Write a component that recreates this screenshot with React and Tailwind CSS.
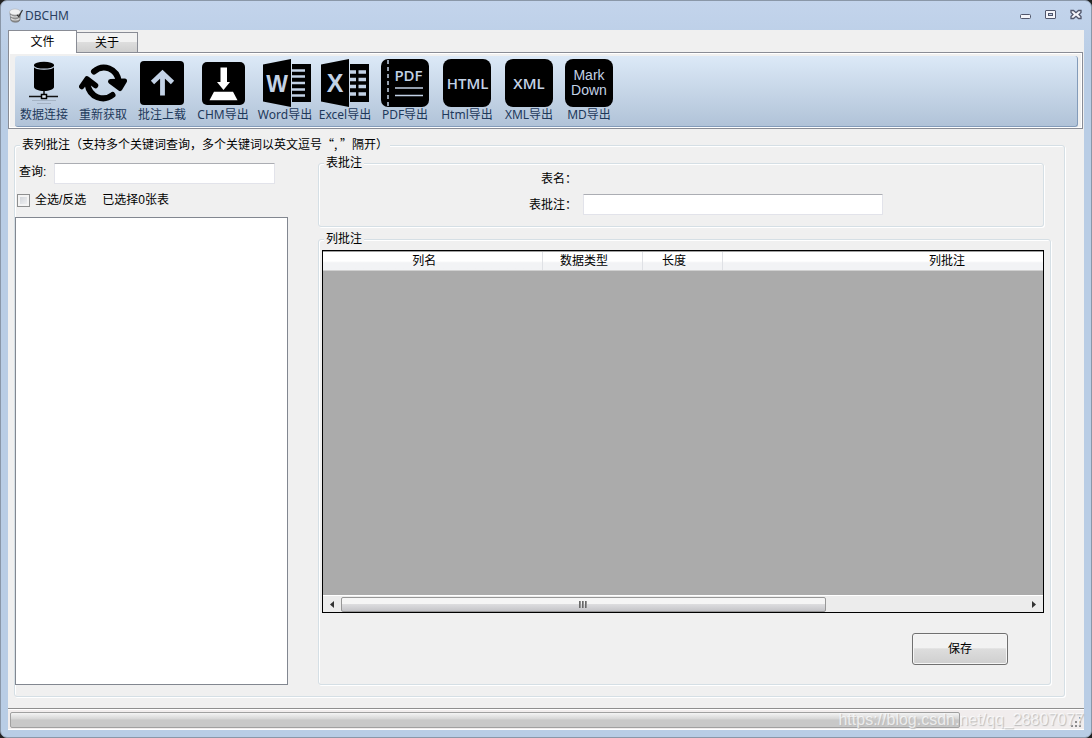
import React, { useState } from "react";

const uiFont = "font-['Noto_Sans','Open_Sans','Noto_Sans_CJK_SC',sans-serif]";

const DatabaseIcon = () => (
  <svg viewBox="0 0 48 48" className="w-12 h-12">
    <path d="M14 6v22c0 2.200 4.500 4 10 4s10-1.800 10-4V6z" fill="#000" />
    <path d="M14 7.500c2 3.500 18 3.500 20 0" fill="none" stroke="#c9d8ea" strokeWidth="1.200" />
    <ellipse cx="24" cy="5.800" rx="10" ry="3" fill="#000" />
    <path d="M24 32v4M9 37.500h13M26 37.500h12" stroke="#111" strokeWidth="1.500" />
    <rect x="21.500" y="35.500" width="5" height="4" fill="#dfe8f2" stroke="#000" strokeWidth="1.500" />
    <path d="M12 41.500h24M17 44.500h14" stroke="#93a0b0" strokeWidth="1" opacity="0.600" />
  </svg>
);

const RefreshIcon = () => (
  <svg viewBox="0 0 48 48" className="w-12 h-12" fill="none" stroke="#000" strokeLinecap="round" strokeLinejoin="round">
    <path d="M15 12.500C24 4.500 38 9 40 23" strokeWidth="6" />
    <path d="M33.500 36C24.500 43 10.500 38.500 8.500 25" strokeWidth="6" />
    <path d="M31.500 22.500L41 29.500 45.500 22z" fill="#000" strokeWidth="5" />
    <path d="M2.800 27.500L8 20 16.500 26.500" strokeWidth="5.500" />
  </svg>
);

const UploadIcon = () => (
  <svg viewBox="0 0 48 48" className="w-12 h-12">
    <rect x="2" y="2" width="44" height="44" rx="4" fill="#000" />
    <path d="M24.500 36.500V14M14.500 23.500l10-9.500 10 9.500" fill="none" stroke="#c3d2e6" strokeWidth="4.800" />
  </svg>
);

const ChmIcon = () => (
  <svg viewBox="0 0 48 48" className="w-12 h-12">
    <rect x="3" y="3" width="43" height="43" rx="5" fill="#000" />
    <path d="M21.500 8.500H28V23h3l-6.500 8L18 23h3.500z" fill="#fff" />
    <path d="M15 32.800h19l4.500 8.400h-28z" fill="#fff" />
  </svg>
);

const WordIcon = () => (
  <svg viewBox="0 0 52 48" className="w-[52px] h-12">
    <path d="M4 5.500L32 0v48L4 42.500zM33 5h19v38H33z" fill="#000" />
    <path d="M33 11.500h13M33 17.500h13M33 24h13M33 30.500h13M33 36.500h13" stroke="#c3d2e6" strokeWidth="2.500" />
    <text x="18" y="33" textAnchor="middle" fill="#c3d2e6" className="text-[23px] font-bold font-['Liberation_Sans',sans-serif]">
      W
    </text>
  </svg>
);

const ExcelIcon = () => (
  <svg viewBox="0 0 48 48" className="w-12 h-12">
    <path d="M0 5.500L28 0v48L0 42.500zM29 5h19v38H29z" fill="#000" />
    <path
      d="M29 13h6M29 20.500h6M29 27.500h6M29 35h6M37.500 13h7.500M37.500 20.500h7.500M37.500 27.500h7.500M37.500 35h7.500"
      stroke="#c3d2e6"
      strokeWidth="3.500"
    />
    <text x="14" y="33" textAnchor="middle" fill="#c3d2e6" className="text-[25px] font-bold font-['Liberation_Sans',sans-serif]">
      X
    </text>
  </svg>
);

const PdfIcon = () => (
  <svg viewBox="0 0 48 48" className="w-12 h-12">
    <rect width="48" height="48" rx="7" fill="#000" />
    <path d="M7 1v46" stroke="#c3d2e6" strokeWidth="1.500" strokeDasharray="4 3" />
    <text x="27.500" y="22" textAnchor="middle" fill="#c3d2e6" className="text-[15px] font-semibold font-['Open_Sans',sans-serif]">
      PDF
    </text>
    <path d="M14 29h28M14 36.500h28" stroke="#c3d2e6" strokeWidth="1.500" />
  </svg>
);

const HtmlIcon = () => (
  <svg viewBox="0 0 48 48" className="w-12 h-12">
    <rect width="48" height="48" rx="8" fill="#000" />
    <text x="24.500" y="30" textAnchor="middle" fill="#c3d2e6" className="text-[15px] font-semibold font-['Open_Sans',sans-serif]">
      HTML
    </text>
  </svg>
);

const XmlIcon = () => (
  <svg viewBox="0 0 48 48" className="w-12 h-12">
    <rect width="48" height="48" rx="8" fill="#000" />
    <text x="24" y="30" textAnchor="middle" fill="#c3d2e6" className="text-[15px] font-semibold font-['Open_Sans',sans-serif]">
      XML
    </text>
  </svg>
);

const MarkdownIcon = () => (
  <svg viewBox="0 0 48 48" className="w-12 h-12">
    <rect width="48" height="48" rx="8" fill="#000" />
    <g fill="#c3d2e6" textAnchor="middle" className="text-[14px] font-['Liberation_Sans',sans-serif]">
      <text x="24" y="21">Mark</text>
      <text x="24" y="36">Down</text>
    </g>
  </svg>
);

const tools = [
  { label: "数据连接", icon: DatabaseIcon, width: "w-[58px]" },
  { label: "重新获取", icon: RefreshIcon, width: "w-[60px]" },
  { label: "批注上载", icon: UploadIcon, width: "w-[58px]" },
  { label: "CHM导出", icon: ChmIcon, width: "w-[64px]" },
  { label: "Word导出", icon: WordIcon, width: "w-[60px]" },
  { label: "Excel导出", icon: ExcelIcon, width: "w-[60px]" },
  { label: "PDF导出", icon: PdfIcon, width: "w-[60px]" },
  { label: "Html导出", icon: HtmlIcon, width: "w-[64px]" },
  { label: "XML导出", icon: XmlIcon, width: "w-[60px]" },
  { label: "MD导出", icon: MarkdownIcon, width: "w-[60px]" },
];

const TitleBar = () => (
  <header className="flex items-center h-[29px] pl-2 pr-[9px]">
    <svg viewBox="0 0 14 15" className="w-3.5 h-[15px]">
      <path d="M1 4.500l.800 7.500c.400 1.500 2.500 2.200 4.700 2.200s4-.700 4.300-2.200l.700-7z" fill="#8d8d8d" stroke="#666" strokeWidth="0.600" />
      <path d="M1.500 7.500c2 2 7 2 9 0M2 10.500c2 2 6.500 2 8.500 0" fill="none" stroke="#dcdcdc" strokeWidth="1.200" />
      <ellipse cx="6" cy="4" rx="5.500" ry="3" fill="#f1f1f1" stroke="#aaa" strokeWidth="0.500" />
      <path d="M13.500 2L9.800 8.500 8 7" fill="none" stroke="#333" strokeWidth="1.200" />
    </svg>
    <h1 className={`ml-0.5 text-xs text-[#2b3f5f] ${uiFont}`}>DBCHM</h1>
    <div className="flex items-center gap-3.5 ml-auto pb-0.5">
      <button type="button" aria-label="最小化">
        <svg viewBox="0 0 11 11" className="w-[11px] h-[11px]">
          <rect x="0.500" y="5.500" width="10" height="4" rx="1" fill="#f5f5fa" stroke="#51566b" />
        </svg>
      </button>
      <button type="button" aria-label="最大化">
        <svg viewBox="0 0 11 11" className="w-[11px] h-[11px]">
          <rect x="0.500" y="1.500" width="10" height="8" rx="0.500" fill="#f5f5fa" stroke="#51566b" />
          <rect x="3.500" y="4.500" width="4" height="2" fill="#c0d0e8" stroke="#51566b" />
        </svg>
      </button>
      <button type="button" aria-label="关闭">
        <svg viewBox="0 0 12 11" className="w-3 h-[11px]">
          <path
            d="M1 1.500h2.500L6 3.700l2.500-2.200H11v2L9 5.500l2 2v2H8.500L6 7.300 3.500 9.500H1v-2l2-2-2-2z"
            fill="#f5f5fa"
            stroke="#51566b"
            strokeWidth="1.300"
          />
        </svg>
      </button>
    </div>
  </header>
);

const Toolbar = () => (
  <div className="mr-px border border-[#898c95] bg-white p-px">
    <div className="bg-[#f0f0f0] pl-[5px] pr-[3px] pt-0.5">
      <div className="flex h-[71px] pt-[3px] rounded-[3px] border-r border-b border-[#839bb9] bg-linear-to-b from-[#dce9f7] to-[#b1c3d8]">
        {tools.map(({ label, icon: Icon, width }) => (
          <button key={label} type="button" className={`flex flex-col items-center shrink-0 ${width}`}>
            <Icon />
            <span className={`text-xs leading-4 whitespace-nowrap text-[#1e395b] ${uiFont}`}>{label}</span>
          </button>
        ))}
      </div>
    </div>
  </div>
);

const GroupBox = ({ id, title, className, bodyClassName, children }) => (
  <div
    role="group"
    aria-labelledby={id}
    className={`flex flex-col border border-[#d5dfe5] rounded-[3px] shadow-[1px_1px_0_#fff,inset_1px_1px_0_#fff] ${className}`}
  >
    <h2
      id={id}
      className="self-start h-[18px] -mt-2.5 ml-[5px] px-0.5 leading-4 bg-[#f0f0f0] font-['Noto_Sans_CJK_SC',sans-serif]"
    >
      {title}
    </h2>
    <div className={`flex flex-1 ${bodyClassName}`}>{children}</div>
  </div>
);

const inputClass =
  "h-[21px] px-1 bg-white border border-[#e2e3ea] border-t-[#abadb3] rounded-[1px] outline-none";

const TableList = () => {
  const [checked, setChecked] = useState(false);

  return (
    <div className="flex flex-col w-[273px] shrink-0 pt-[9px]">
      <div className="flex pl-1">
        <label htmlFor="search" className="w-[35px] leading-[18px]">
          查询:
        </label>
        <input id="search" type="text" className={`w-[221px] ${inputClass}`} />
      </div>
      <div className="flex items-center h-4 mt-2 pl-0.5">
        <input
          id="all"
          type="checkbox"
          checked={checked}
          onChange={() => setChecked(!checked)}
          className="appearance-none w-[13px] h-[13px] border border-[#8e8f8f] bg-linear-to-br from-[#cbcfd5] to-[#f6f6f6] shadow-[inset_0_0_0_2px_#f4f4f4] checked:bg-[#4b6bb0]"
        />
        <label htmlFor="all" className="ml-[5px]">
          全选/反选
        </label>
        <span className="ml-4">已选择0张表</span>
      </div>
      <div role="listbox" aria-label="表" className="flex-1 mt-[9px] bg-white border border-[#828790]" />
    </div>
  );
};

const columns = [
  { name: "列名", width: "w-[219px]" },
  { name: "数据类型", width: "w-[100px]" },
  { name: "长度", width: "w-[80px]" },
  { name: "列批注", width: "w-[466px]" },
];

const ColumnGrid = () => (
  <div className="flex flex-col flex-1 mt-0.5 border border-black bg-[#ababab] overflow-hidden">
    <div className="overflow-hidden border-t border-[#a0a0a0] bg-[#f0f0f0]">
      <table className="table-fixed w-[865px] h-[19px] border-collapse">
        <thead>
          <tr>
            {columns.map((col) => (
              <th
                key={col.name}
                className={`pr-4 pt-px pb-0 leading-[17px] font-normal border-r border-b border-r-[#dfe1e5] border-b-[#d0d0d0] bg-linear-to-b from-white from-50% to-[#f2f3f5] to-60% ${col.width}`}
              >
                {col.name}
              </th>
            ))}
          </tr>
        </thead>
      </table>
    </div>
    <div className="flex-1" />
    <div className="flex h-[17px] pt-px border-t border-white bg-[#ececec]">
      <button type="button" aria-label="向左滚动" className="flex items-center justify-center w-[18px]">
        <svg viewBox="0 0 4 7" className="w-1 h-[7px]">
          <path d="M4 0v7L0 3.500z" fill="#333" />
        </svg>
      </button>
      <div className="flex flex-1">
        <div className="flex flex-[485] items-center justify-center gap-px border border-[#979797] rounded-[2px] bg-linear-to-b from-[#f5f5f5] from-45% via-[#dcdcde] via-50% to-[#c4c4c8]">
          <span className="w-0.5 h-[7px] bg-linear-to-r from-[#555] to-[#aaa]" />
          <span className="w-0.5 h-[7px] bg-linear-to-r from-[#555] to-[#aaa]" />
          <span className="w-0.5 h-[7px] bg-linear-to-r from-[#555] to-[#aaa]" />
        </div>
        <div className="flex-[200]" />
      </div>
      <button type="button" aria-label="向右滚动" className="flex items-center justify-center w-[18px]">
        <svg viewBox="0 0 4 7" className="w-1 h-[7px]">
          <path d="M0 0v7l4-3.500z" fill="#333" />
        </svg>
      </button>
    </div>
  </div>
);

const StatusBar = () => (
  <footer className="relative flex h-[22px] mt-[11px] pt-[3px] pl-0.5 pr-[124px] border-t border-[#8e8e8e] bg-[#f1eded] shadow-[inset_0_1px_0_#fff,inset_0_-1px_0_#fff]">
    <div
      role="progressbar"
      aria-label="进度"
      className="flex-1 h-4 border border-[#a0a0a0] rounded-[2px] bg-linear-to-b from-[#f4f4f4] via-[#d8d8d8] via-40% to-[#c8c8c8] to-50%"
    />
    <svg viewBox="0 0 11 11" className="absolute right-0.5 bottom-0.5 w-[11px] h-[11px]" fill="#8c8c8c">
      <path d="M8 0h2v2H8zM4 4h2v2H4zM8 4h2v2H8zM0 8h2v2H0zM4 8h2v2H4zM8 8h2v2H8z" />
    </svg>
    <span className="absolute right-0 top-0.5 text-base leading-[18px] whitespace-nowrap text-white/70 [text-shadow:1px_1px_1px_#bbb] font-['Liberation_Sans',sans-serif]">
      https://blog.csdn.net/qq_28807077
    </span>
  </footer>
);

const App = () => {
  return (
    <div className="bg-[#222]">
      <div className="flex flex-col min-h-screen rounded-[7px] border border-[#8a97a8] bg-[#bacee6] bg-linear-to-b from-[#c3d4ec] to-[#b9cde5] to-[60px] text-xs text-black font-['Liberation_Sans','Noto_Sans_CJK_SC',sans-serif]">
        <TitleBar />
        <main className="flex flex-col flex-1 mx-[7px] mb-[7px] bg-[#f0f0f0]">
          <div role="tablist" className="flex items-end h-[22px]">
            <button
              type="button"
              role="tab"
              aria-selected="true"
              className="relative z-10 w-[69px] h-[23px] -mb-px border border-b-0 border-[#898c95] bg-white"
            >
              文件
            </button>
            <button
              type="button"
              role="tab"
              aria-selected="false"
              className="w-[61px] h-5 pt-px border border-l-0 border-b-0 border-[#898c95] bg-linear-to-b from-[#f2f2f2] from-45% via-[#dddddd] via-50% to-[#cfcfcf]"
            >
              关于
            </button>
          </div>
          <Toolbar />
          <GroupBox
            id="group-all"
            title="表列批注（支持多个关键词查询，多个关键词以英文逗号“, ”隔开）"
            className="flex-1 mt-4 ml-1.5 mr-[19px]"
            bodyClassName="gap-[30px] pb-[11px]"
          >
            <TableList />
            <div className="flex flex-col flex-1 min-w-0 pr-[13px]">
              <GroupBox id="group-table" title="表批注" className="mt-[9px] mr-[7px]" bodyClassName="justify-start pb-[11px]">
                <div className="grid grid-cols-[258px_300px] gap-x-1.5 items-center">
                  <span className="self-start text-right leading-[14px]">表名：</span>
                  <span className="h-[22px]" />
                  <label htmlFor="comment" className="text-right leading-4">
                    表批注：
                  </label>
                  <input id="comment" type="text" className={inputClass} />
                </div>
              </GroupBox>
              <GroupBox
                id="group-column"
                title="列批注"
                className="flex-1 mt-3"
                bodyClassName="flex-col pl-[3px] pr-1.5 pb-[19px]"
              >
                <ColumnGrid />
                <button
                  type="button"
                  className="self-end w-24 h-8 mt-5 mr-9 border border-[#707070] rounded-[3px] bg-linear-to-b from-[#f2f2f2] from-45% via-[#dddddd] via-50% to-[#cfcfcf] shadow-[inset_0_0_0_1px_#f6f6f6]"
                >
                  保存
                </button>
              </GroupBox>
            </div>
          </GroupBox>
          <StatusBar />
        </main>
      </div>
    </div>
  );
};

export default App;
